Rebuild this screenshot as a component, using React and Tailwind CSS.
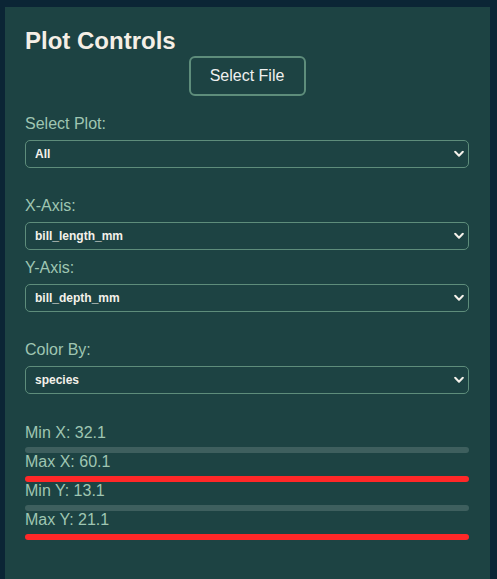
import React from 'react';

const Chevron = () => (
  <svg
    className="pointer-events-none absolute right-[5px] top-1/2 -translate-y-1/2"
    width="10"
    height="7"
    viewBox="0 0 10 7"
    fill="none"
  >
    <path d="M1.2 1.3 L5 5.2 L8.8 1.3" stroke="#f4f1ea" strokeWidth="2" strokeLinecap="round" strokeLinejoin="round" />
  </svg>
);

const Dropdown = ({ value, options }) => (
  <div className="relative">
    <select
      defaultValue={value}
      className="block h-[28px] w-full appearance-none rounded-[5px] border border-[#5e8d7b] bg-[#1d4343] pl-[9px] pr-6 text-[12px] font-bold text-[#f4f1ea] outline-none"
    >
      {options.map((o) => (
        <option key={o} value={o}>
          {o}
        </option>
      ))}
    </select>
    <Chevron />
  </div>
);

const Label = ({ children, className = '' }) => (
  <label className={`block text-[16px] leading-[18px] text-[#9fc6b2] ${className}`}>{children}</label>
);

const Range = ({ label, active }) => (
  <div>
    <div className="text-[16px] leading-[17px] text-[#9fc6b2]">{label}</div>
    <div className={`mt-[6px] h-[6px] rounded-full ${active ? 'bg-[#ff2828]' : 'bg-[#3e5f5e]'}`} />
  </div>
);

export default function App() {
  const cols = ['bill_length_mm', 'bill_depth_mm', 'flipper_length_mm', 'body_mass_g'];

  return (
    <div
      className="min-h-[579px] bg-[#0b2535] pl-[5px] pr-[7px] pt-[7px]"
      style={{ fontFamily: '"Liberation Sans", Arial, sans-serif' }}
    >
      <div className="min-h-[572px] bg-[#1d4343] pl-[20px] pr-[21px] pt-[20px]">
        <h2 className="text-[24px] font-bold leading-[28px] text-[#f5efe6]">Plot Controls</h2>

        <div className="mt-[1px] flex justify-center">
          <button className="h-[40px] w-[117px] rounded-[6px] border-2 border-[#5e8d7b] text-[16px] text-[#f0f0f0]">
            Select File
          </button>
        </div>

        <Label className="mt-[19px] mb-[7px]">Select Plot:</Label>
        <Dropdown value="All" options={['All', 'Scatter', 'Histogram']} />

        <Label className="mt-[29px] mb-[7px]">X-Axis:</Label>
        <Dropdown value="bill_length_mm" options={cols} />

        <Label className="mt-[9px] mb-[7px]">Y-Axis:</Label>
        <Dropdown value="bill_depth_mm" options={cols} />

        <Label className="mt-[29px] mb-[7px]">Color By:</Label>
        <Dropdown value="species" options={['species', 'island', 'sex']} />

        <div className="mt-[30px]">
          <Range label="Min X: 32.1" />
          <Range label="Max X: 60.1" active />
          <Range label="Min Y: 13.1" />
          <Range label="Max Y: 21.1" active />
        </div>
      </div>
    </div>
  );
}
